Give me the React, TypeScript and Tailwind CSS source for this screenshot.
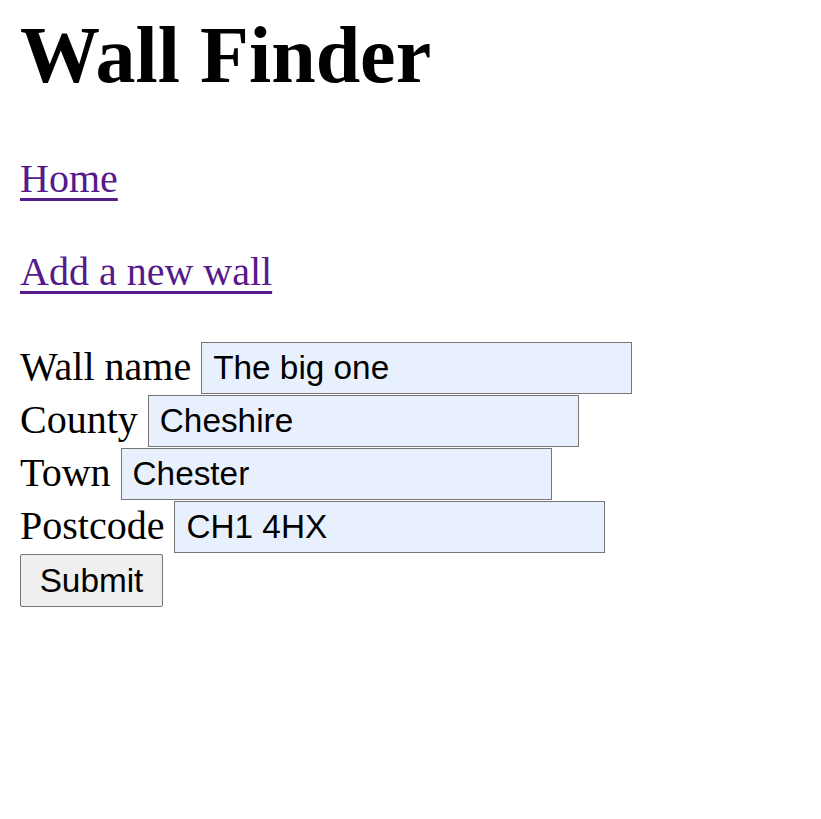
import { useState } from "react";

const FIELDS = [
  { label: "Wall name", value: "The big one" },
  { label: "County", value: "Cheshire" },
  { label: "Town", value: "Chester" },
  { label: "Postcode", value: "CH1 4HX" },
];

export default function App() {
  const [values, setValues] = useState(FIELDS.map((f) => f.value));

  return (
    <div className="min-h-[819px] bg-white px-[20px] pt-[11px] font-['Liberation_Serif',serif] text-black">
      <h1 className="text-[80px] font-bold leading-[88px]">Wall Finder</h1>

      <p className="mt-[57px] text-[40px] leading-[46px]">
        <a href="#" className="text-[#551a8b] underline decoration-[3px] underline-offset-[6px]">
          Home
        </a>
      </p>
      <p className="mt-[47px] text-[40px] leading-[46px]">
        <a href="#" className="text-[#551a8b] underline decoration-[3px] underline-offset-[6px]">
          Add a new wall
        </a>
      </p>

      {/* Form */}
      <form className="mt-[47px] flex flex-col gap-[1px]" onSubmit={(e) => e.preventDefault()}>
        {FIELDS.map((f, i) => (
          <div key={f.label} className="flex h-[52px] items-start gap-[10px]">
            <label className="mt-[2px] text-[40px] leading-[46px]">{f.label}</label>
            <input
              value={values[i]}
              onChange={(e) => setValues(values.map((v, j) => (j === i ? e.target.value : v)))}
              className="h-[52px] w-[431px] border border-[#767676] bg-[#e8f0fe] px-[11px] font-['Liberation_Sans',Arial,sans-serif] text-[33.33px] text-black outline-none"
            />
          </div>
        ))}
        <div>
          <button
            type="submit"
            className="h-[53px] w-[143px] rounded-[2px] border border-[#767676] bg-[#efefef] font-['Liberation_Sans',Arial,sans-serif] text-[33.33px] text-black"
          >
            Submit
          </button>
        </div>
      </form>
    </div>
  );
}
